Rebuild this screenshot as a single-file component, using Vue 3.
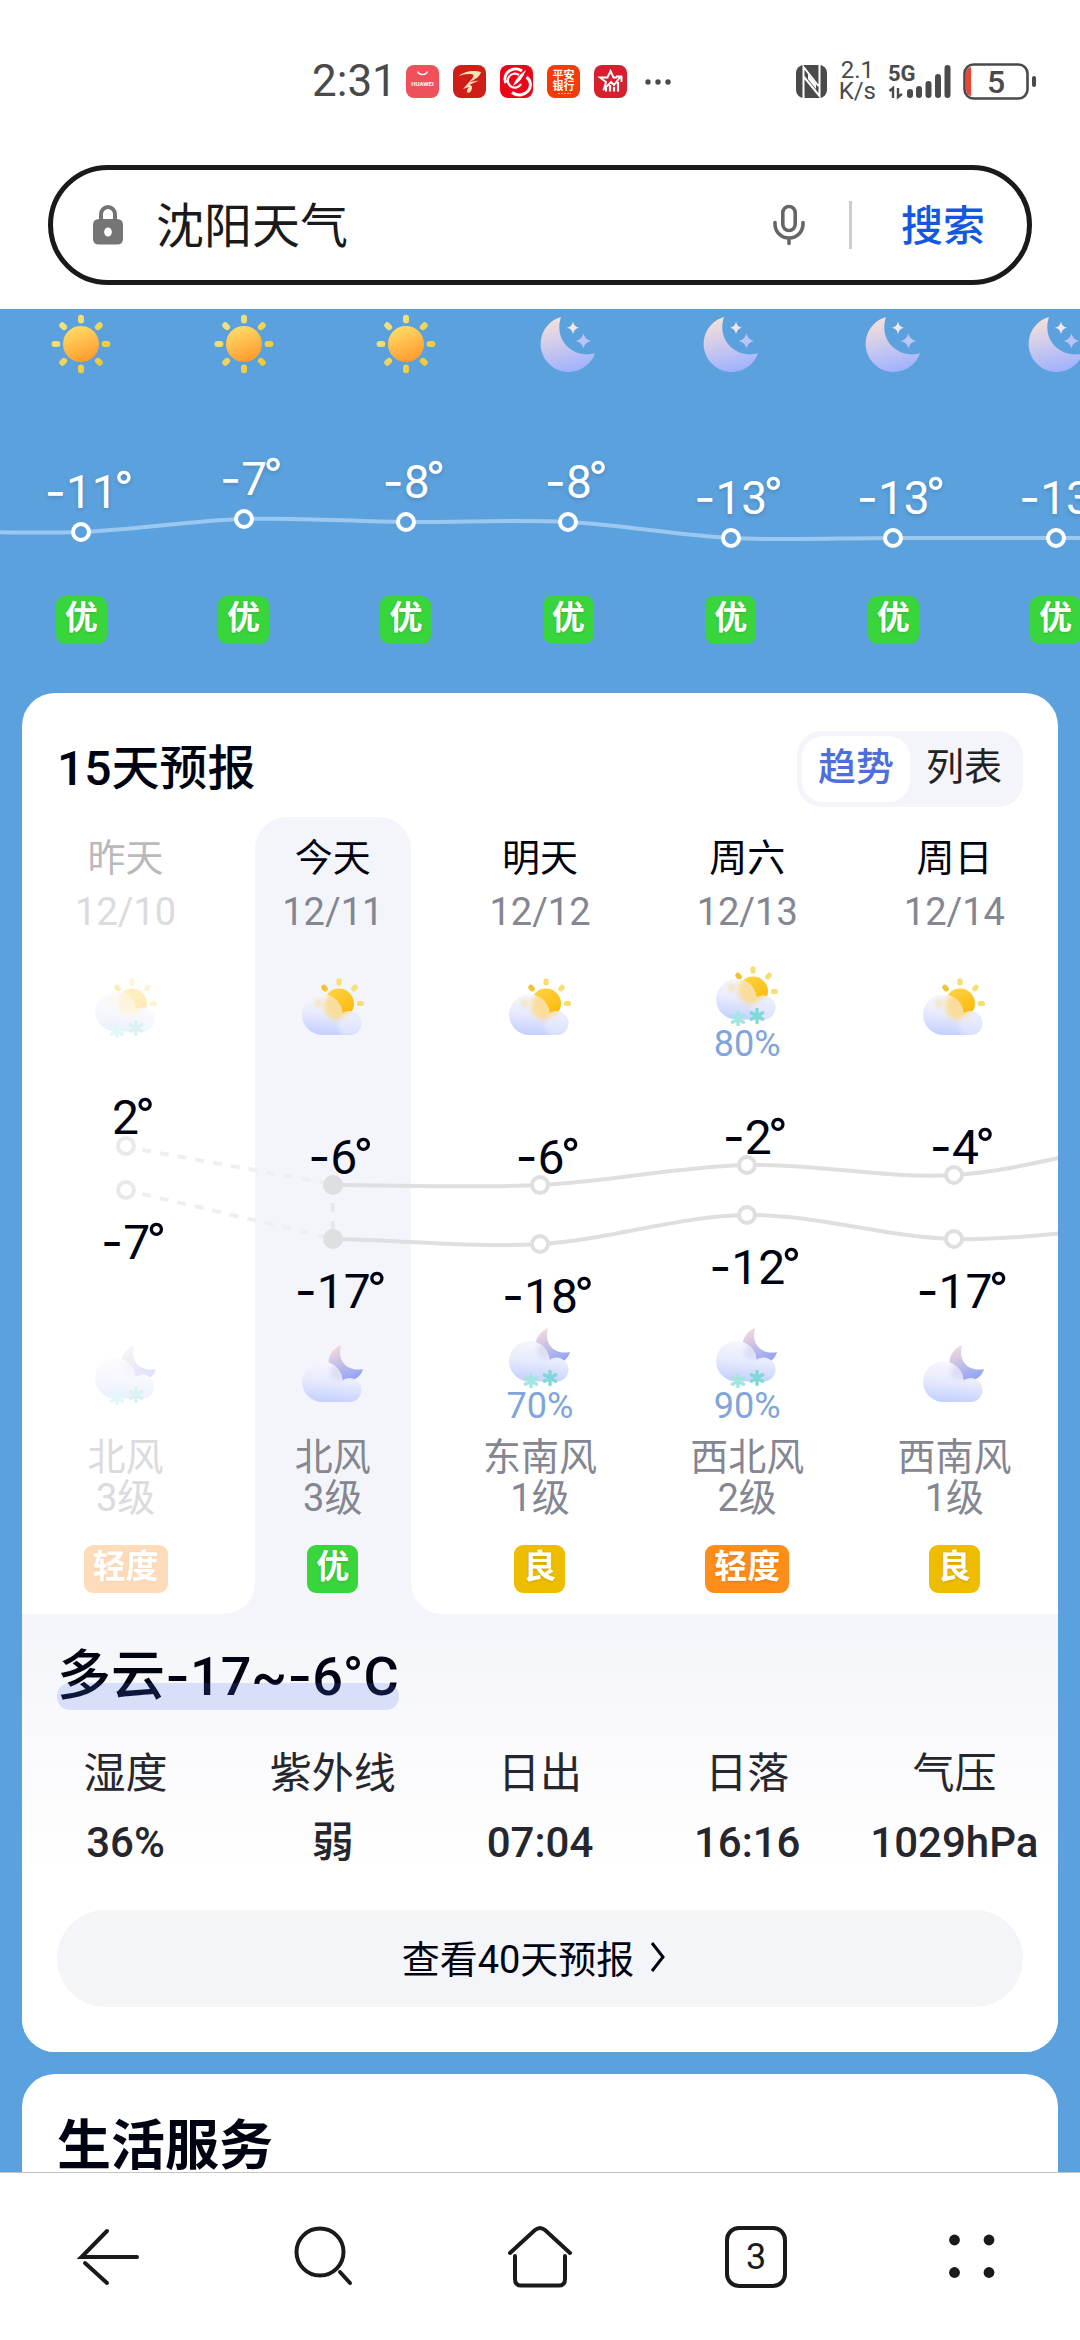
<script setup>
import { computed, h } from 'vue'

const hours = [
  { icon: 'sun', temp: -11, y: 158 },
  { icon: 'sun', temp: -7, y: 145 },
  { icon: 'sun', temp: -8, y: 148 },
  { icon: 'moon', temp: -8, y: 148 },
  { icon: 'moon', temp: -13, y: 164 },
  { icon: 'moon', temp: -13, y: 164 },
  { icon: 'moon', temp: -13, y: 164 },
]

const days = [
  { name: '昨天', date: '12/10', past: true, daySnow: true, nightSnow: true, high: 2, low: -7, hy: 84, ly: 128, wind: '北风', level: '3级', air: '轻度', tone: 'light' },
  { name: '今天', date: '12/11', today: true, high: -6, low: -17, hy: 123, ly: 177, wind: '北风', level: '3级', air: '优', tone: 'good' },
  { name: '明天', date: '12/12', nightSnow: true, nightRain: '70%', high: -6, low: -18, hy: 123, ly: 182, wind: '东南风', level: '1级', air: '良', tone: 'fair' },
  { name: '周六', date: '12/13', daySnow: true, dayRain: '80%', nightSnow: true, nightRain: '90%', high: -2, low: -12, hy: 103, ly: 153, wind: '西北风', level: '2级', air: '轻度', tone: 'light' },
  { name: '周日', date: '12/14', high: -4, low: -17, hy: 113, ly: 177, wind: '西南风', level: '1级', air: '良', tone: 'fair' },
]

const facts = [
  { label: '湿度', value: '36%' },
  { label: '紫外线', value: '弱' },
  { label: '日出', value: '07:04' },
  { label: '日落', value: '16:16' },
  { label: '气压', value: '1029hPa' },
]

// Catmull-Rom spline through evenly spaced values
function smooth(ys, startX, step = 100) {
  const pts = ys.map((y, i) => [startX + i * step, y])
  let d = `M${pts[0][0]} ${pts[0][1]}`
  for (let i = 0; i < pts.length - 1; i++) {
    const p0 = pts[i - 1] || pts[i]
    const [p1, p2] = [pts[i], pts[i + 1]]
    const p3 = pts[i + 2] || p2
    d += ` C${p1[0] + step / 3} ${p1[1] + (p2[1] - p0[1]) / 6} ${p2[0] - step / 3} ${p2[1] - (p3[1] - p1[1]) / 6} ${p2[0]} ${p2[1]}`
  }
  return d
}

const hourLine = computed(() => smooth([157, ...hours.map((x) => x.y), 164], -50))
const highLine = computed(() => smooth([...days.slice(1).map((x) => x.hy), 78], 150))
const lowLine = computed(() => smooth([...days.slice(1).map((x) => x.ly), 163], 150))

const Temp = (props) =>
  h('span', { class: 'temp-num' }, [
    props.value < 0 ? h('span', { class: 'minus' }, '-') : null,
    String(Math.abs(props.value)),
    h('span', { class: 'deg' }, '°'),
  ])
Temp.props = ['value']
</script>

<template>
  <div class="page">
    <svg class="defs" width="0" height="0" aria-hidden="true">
      <defs>
        <linearGradient id="sunFill" x1="0.3" y1="0" x2="0.7" y2="1">
          <stop offset="0" stop-color="#ffdd66" /><stop offset="1" stop-color="#ff982c" />
        </linearGradient>
        <linearGradient id="rayFill" gradientUnits="userSpaceOnUse" x1="5" y1="5" x2="55" y2="55">
          <stop offset="0" stop-color="#f2e486" /><stop offset="1" stop-color="#f0c62c" />
        </linearGradient>
        <linearGradient id="moonFill" gradientUnits="userSpaceOnUse" x1="22" y1="3" x2="34" y2="57">
          <stop offset="0" stop-color="#f5e0da" /><stop offset="1" stop-color="#a0b2ff" />
        </linearGradient>
        <linearGradient id="smallSun" x1="0" y1="0" x2="0.6" y2="1">
          <stop offset="0" stop-color="#ffd64a" /><stop offset="1" stop-color="#fbb90a" />
        </linearGradient>
        <linearGradient id="nightFill" x1="0.2" y1="0" x2="0.6" y2="1">
          <stop offset="0" stop-color="#f6dcd8" /><stop offset="1" stop-color="#91a2f6" />
        </linearGradient>
        <linearGradient id="cloudFill" x1="0.6" y1="0" x2="0.45" y2="1">
          <stop offset="0" stop-color="#f7f7fd" /><stop offset="0.5" stop-color="#e8ebfc" /><stop offset="1" stop-color="#c4d0ff" />
        </linearGradient>
        <clipPath id="cloudClip"><path d="M21 57A20.3 20.3 0 1 1 40.6 35.2A12 12 0 1 1 47 57Z" /></clipPath>
        <filter id="soft" x="-50%" y="-50%" width="200%" height="200%"><feGaussianBlur stdDeviation="2" /></filter>
        <symbol id="flake" viewBox="-8 -8 16 16">
          <path d="M0 -6.5V6.5M-5.6 -3.2L5.6 3.2M-5.6 3.2L5.6 -3.2" stroke-width="3.4" stroke-linecap="round" />
          <circle r="3.6" stroke="none" />
        </symbol>
        <symbol id="sun" viewBox="0 0 60 60">
          <circle cx="30" cy="30" r="18" fill="url(#sunFill)" />
          <g stroke="url(#rayFill)" stroke-width="6" stroke-linecap="round">
            <path d="M30 3.8L30.01 6.4M30 53.6L30.01 56.2M3.6 30L6.4 30.01M53.6 30L56.4 30.01M11.3 11.3L13.1 13.1M46.9 13.1L48.7 11.3M11.3 48.7L13.1 46.9M46.9 46.9L48.7 48.7" />
          </g>
        </symbol>
        <symbol id="moon" viewBox="-1 0 60 60">
          <path fill="url(#moonFill)" d="M22 3A28 28 0 1 0 56 39.3C36 45 14 28 22 3Z" />
          <path fill="#f2e6ea" d="M34 7.5Q35 12.7 40 13.7Q35 14.7 34 20Q33 14.7 28 13.7Q33 12.7 34 7.5Z" />
          <path fill="#bcc4f8" d="M44.4 19.5Q45.8 25.6 52 27Q45.8 28.4 44.4 34.5Q43 28.4 36.8 27Q43 25.6 44.4 19.5Z" />
        </symbol>
        <symbol id="cloud" viewBox="0 0 62 60">
          <path fill="url(#cloudFill)" d="M21 57A20.3 20.3 0 1 1 40.6 35.2A12 12 0 1 1 47 57Z" />
        </symbol>
      </defs>
    </svg>

    <header class="status">
      <div class="status-left">
        <span class="clock">2:31</span>
        <svg class="app" viewBox="0 0 33 33">
          <rect width="33" height="33" rx="8" fill="#f0505a" />
          <path d="M11.5 6.5A5.5 5.5 0 0 0 21.5 6.5" fill="none" stroke="#fff" stroke-width="1.3" />
          <text x="16.5" y="21" text-anchor="middle" font-size="6" font-weight="700" fill="#fff">HUAWEI</text>
        </svg>
        <svg class="app" viewBox="0 0 33 33">
          <rect width="33" height="33" rx="8" fill="#cf1d18" />
          <path d="M6 11C11 6 21 5 28 7C27 11 23 14 17 17L26 15.5L16 20C19 20 20 22 18 26C16 29 13 28 14 25L16 22L10 24L17 16C20 13 21 11 20 9.500C15 8.500 10 9.500 6 11Z" fill="#fbe3b8" />
        </svg>
        <svg class="app" viewBox="0 0 33 33">
          <rect width="33" height="33" rx="8" fill="#ec0519" />
          <path d="M22 6A10.500 10 0 0 0 6 18M12 27.500A11 10 0 0 0 26.500 12" fill="none" stroke="#fff" stroke-width="3" />
          <path d="M19 10A7 7 0 1 0 21 19" fill="none" stroke="#fff" stroke-width="2.200" />
          <path d="M26 5Q22 16 13 21Q16 12 26 5Z" fill="#fff" />
        </svg>
        <svg class="app" viewBox="0 0 33 33">
          <rect width="33" height="33" rx="8" fill="#f73a08" />
          <text x="16.5" y="14" text-anchor="middle" font-size="11" font-weight="700" fill="#fff">平安</text>
          <text x="16.5" y="25" text-anchor="middle" font-size="11" font-weight="700" fill="#fff">银行</text>
          <path d="M11 28.5H24" stroke="#ffc2a8" stroke-width="1" stroke-dasharray="2 1" />
        </svg>
        <svg class="app" viewBox="0 0 33 33">
          <rect width="33" height="33" rx="8" fill="#d6202e" />
          <path d="M10 24L12 17L6 12.5H13.5L16.5 6L19.500 12.5H23M9 25L17 17L20 20L27 11M22 11.500H27.500V17" fill="none" stroke="#fff" stroke-width="1.900" />
          <path d="M12 26.500V23M16 26.500V20M20 26.500V22M24 26.500V17" stroke="#fff" stroke-width="2.200" />
        </svg>
        <svg class="more" viewBox="0 0 26 33"><g fill="#4a4a4a"><circle cx="3" cy="17" r="2.700" /><circle cx="13" cy="17" r="2.700" /><circle cx="23" cy="17" r="2.700" /></g></svg>
      </div>
      <div class="status-right">
        <svg width="31" height="33" viewBox="0 0 31 33">
          <rect width="31" height="33" rx="8" fill="#4a4a4a" />
          <path d="M7.500 33V2L22.500 21M23.500 0V31L8 12" fill="none" stroke="#fff" stroke-width="2" />
          <path d="M12 14L20 24V19L12 9Z" fill="#fff" />
        </svg>
        <span class="speed">2.1<br />K/s</span>
        <svg width="63" height="44" viewBox="0 0 63 44">
          <text x="0" y="22" font-size="22" font-weight="700" fill="#4a4a4a">5G</text>
          <path d="M1.500 32L5 29V39M10 29V38L14 35" fill="none" stroke="#4a4a4a" stroke-width="2.400" />
          <path d="M22 33V36M31 30V36M40.500 25V36M50 18V36M59.500 9V36" stroke="#4a4a4a" stroke-width="6" stroke-linecap="round" />
        </svg>
        <svg width="74" height="37" viewBox="0 0 74 37">
          <path d="M3 11Q3 5 8 4V33Q3 32 3 26Z" fill="#ec4435" />
          <rect x="1.5" y="1.5" width="63" height="34" rx="9" fill="none" stroke="#4a4a4a" stroke-width="2.600" />
          <rect x="69" y="13" width="4" height="11" rx="2" fill="#4a4a4a" />
          <text x="33" y="30" text-anchor="middle" font-size="32" font-weight="500" fill="#4a4a4a">5</text>
        </svg>
      </div>
    </header>

    <form class="search" role="search" @submit.prevent>
      <svg width="30" height="40" viewBox="0 0 30 40" aria-hidden="true">
        <path d="M8 16V9.500A7 7.500 0 0 1 22 9.500V16" fill="none" stroke="#757575" stroke-width="4" />
        <path fill="#757575" fill-rule="evenodd" d="M6 14H24Q30 14 30 20V34Q30 39.500 24 39.500H6Q0 39.500 0 34V20Q0 14 6 14ZM15 22.500A3.600 4.200 0 1 0 15 31.500A3.600 4.200 0 1 0 15 22.500Z" />
      </svg>
      <input class="query" type="text" value="沈阳天气" aria-label="搜索内容" />
      <button class="mic" type="button" aria-label="语音搜索">
        <svg width="32" height="42" viewBox="0 0 32 42" fill="none" stroke="#666" stroke-width="3.600" stroke-linecap="round">
          <rect x="9.800" y="2.500" width="12.400" height="24" rx="6.200" />
          <path d="M2 18.500V20A14 14 0 0 0 30 20V18.500M16 34V39.500" />
        </svg>
      </button>
      <span class="divider"></span>
      <button class="go" type="submit">搜索</button>
    </form>

    <main class="content">
      <section class="hourly">
        <svg class="hour-line" viewBox="0 0 665 222" preserveAspectRatio="none">
          <path :d="hourLine" fill="none" stroke="#9bc8f0" stroke-width="4" vector-effect="non-scaling-stroke" />
        </svg>
        <div v-for="(hour, i) in hours" :key="i" class="hour">
          <svg width="60" height="60"><use :href="'#' + hour.icon" /></svg>
          <div class="hour-chart">
            <span class="label hour-label" :style="{ top: hour.y - 65 + 'px' }"><Temp :value="hour.temp" /></span>
            <span class="dot hour-dot" :style="{ top: hour.y - 10 + 'px' }"></span>
          </div>
          <span class="tag good">优</span>
        </div>
      </section>

      <section class="card">
        <div class="card-head">
          <h2 class="title">15天预报</h2>
          <div class="switch">
            <button type="button" class="on">趋势</button>
            <button type="button">列表</button>
          </div>
        </div>

        <div class="days">
          <svg class="day-line" viewBox="0 0 500 266" preserveAspectRatio="none">
            <g fill="none" stroke="#dedfe1" stroke-width="4">
              <path :d="highLine" vector-effect="non-scaling-stroke" />
              <path :d="lowLine" vector-effect="non-scaling-stroke" />
              <path d="M150 141V168" stroke-dasharray="9 9" stroke="#e6e7ea" vector-effect="non-scaling-stroke" />
              <path d="M58 88L147 121M58 132L147 175" stroke-dasharray="9 9" stroke="#eeeff1" vector-effect="non-scaling-stroke" />
            </g>
          </svg>
          <article v-for="day in days" :key="day.date" class="day" :class="{ past: day.past, today: day.today }">
            <h3 class="day-name">{{ day.name }}</h3>
            <p class="day-date">{{ day.date }}</p>
            <div class="sky" :class="{ raised: day.dayRain }">
              <svg class="sky-icon" width="62" height="60" viewBox="0 0 62 60">
                <circle cx="37" cy="25.500" r="15" fill="url(#smallSun)" />
                <g stroke-width="5.200" stroke-linecap="round">
                  <path d="M37 2.800V5M51.700 10.800L53.200 9.300M57.300 25.500H59.400" stroke="#f8df74" />
                  <path d="M21.800 9.300L23.300 10.800" stroke="#f2c233" />
                </g>
                <g :transform="day.daySnow ? 'translate(0 -3.500)' : null">
                  <use href="#cloud" width="62" height="60" />
                  <g clip-path="url(#cloudClip)">
                    <circle cx="36" cy="28" r="14" fill="#fbdb92" filter="url(#soft)" opacity="0.900" />
                    <circle cx="16" cy="25" r="3.500" fill="#f8e0b0" filter="url(#soft)" />
                    <circle cx="48" cy="47" r="12" fill="#eef0fd" filter="url(#soft)" opacity="0.500" />
                  </g>
                </g>
                <g v-if="day.daySnow">
                  <use href="#flake" x="14" y="45" width="16" height="16" fill="#a2e6e2" stroke="#a2e6e2" />
                  <use href="#flake" x="33" y="42" width="16" height="16" fill="#7fd9d6" stroke="#7fd9d6" />
                </g>
              </svg>
              <span v-if="day.dayRain" class="rain">{{ day.dayRain }}</span>
            </div>
            <div class="day-chart">
              <span class="dot" :style="{ top: day.hy - 10 + 'px' }"></span>
              <span class="dot" :style="{ top: day.ly - 10 + 'px' }"></span>
              <span class="label" :style="{ top: day.hy - 52 + 'px' }"><Temp :value="day.high" /></span>
              <span class="label" :style="{ top: day.ly + 28 + 'px' }"><Temp :value="day.low" /></span>
            </div>
            <div class="sky night" :class="{ raised: day.nightRain }">
              <svg class="sky-icon" width="62" height="60" viewBox="0 0 62 60">
                <path fill="url(#nightFill)" d="M39 0C30 4 25 12 27 21C29 32 38 37 46 36C54 35 59 31 61 24C49 27 34 19 39 0Z" />
                <g :transform="day.nightSnow ? 'translate(0 -3.500)' : null">
                  <use href="#cloud" width="62" height="60" />
                  <g clip-path="url(#cloudClip)">
                    <circle cx="36" cy="27" r="8" fill="#dcdcf6" filter="url(#soft)" opacity="0.900" />
                  </g>
                </g>
                <g v-if="day.nightSnow">
                  <use href="#flake" x="14" y="45" width="16" height="16" fill="#a2e6e2" stroke="#a2e6e2" />
                  <use href="#flake" x="33" y="42" width="16" height="16" fill="#7fd9d6" stroke="#7fd9d6" />
                </g>
              </svg>
              <span v-if="day.nightRain" class="rain">{{ day.nightRain }}</span>
            </div>
            <p class="wind">{{ day.wind }}<br />{{ day.level }}</p>
            <span class="tag" :class="day.tone">{{ day.air }}</span>
          </article>
        </div>

        <div class="detail">
          <h2 class="summary">多云<span class="minus">-</span>17~<span class="minus">-</span>6°C</h2>
          <dl class="facts">
            <div v-for="fact in facts" :key="fact.label" class="fact">
              <dt>{{ fact.label }}</dt>
              <dd>{{ fact.value }}</dd>
            </div>
          </dl>
          <a class="more-link" href="#">
            查看40天预报
            <svg width="16" height="30" viewBox="0 0 16 30" fill="none" stroke="#000311" stroke-width="3" aria-hidden="true"><path d="M2 1L13 15L2 29" /></svg>
          </a>
        </div>
      </section>

      <section class="card life">
        <h2 class="life-title">生活服务</h2>
      </section>
    </main>

    <nav class="bar">
      <button type="button" aria-label="返回">
        <svg viewBox="0 0 64 64"><path d="M31 6L5.500 32H61M9 38L31 58" /></svg>
      </button>
      <button type="button" aria-label="搜索">
        <svg viewBox="0 0 64 64"><circle cx="28" cy="27" r="23.500" /><path d="M48 47L58 58" /></svg>
      </button>
      <button type="button" aria-label="主页">
        <svg viewBox="0 0 64 64"><path d="M2 28L27 5Q32 1 37 5L62 28M7 31V54Q7 60.500 13 60.500H51Q57 60.500 57 54V31" /></svg>
      </button>
      <button type="button" aria-label="标签页"><span class="tabs">3</span></button>
      <button type="button" aria-label="菜单">
        <svg class="dots" viewBox="0 0 64 64"><circle cx="14.500" cy="15" r="5.400" /><circle cx="49" cy="15" r="5.400" /><circle cx="14.500" cy="47.500" r="5.400" /><circle cx="49" cy="47.500" r="5.400" /></svg>
      </button>
    </nav>
  </div>
</template>

<style>
body {
  margin: 0;
  background: #fff;
}
</style>

<style scoped>
.page {
  display: flex;
  flex-direction: column;
  height: 100vh;
  overflow: hidden;
  background: #fff;
  color: #000311;
  font-family: Roboto, "Noto Sans CJK SC", sans-serif;
}
.defs {
  position: absolute;
}
h2, h3, p, dl, dd {
  margin: 0;
  font-weight: 400;
}
button {
  padding: 0;
  border: 0;
  background: none;
  color: inherit;
  font: inherit;
}
svg {
  display: block;
}
:deep(.minus), .minus {
  font-family: Inter, sans-serif;
}

/* status bar */
.status {
  display: flex;
  flex: none;
  justify-content: space-between;
  align-items: center;
  height: 52px;
  padding: 55px 43px 0 312px;
  color: #4a4a4a;
}
.status-left, .status-right {
  display: flex;
  align-items: center;
  gap: 14px;
}
.status-right {
  gap: 12px;
}
.clock {
  width: 80px;
  font-size: 44px;
  line-height: 52px;
}
.app {
  width: 33px;
  height: 33px;
}
.more {
  width: 26px;
  height: 33px;
  margin-left: 4px;
}
.speed {
  font-size: 24px;
  line-height: 21px;
  text-align: center;
}

/* search box */
.search {
  display: flex;
  flex: none;
  align-items: center;
  box-sizing: border-box;
  height: 120px;
  margin: 58px 48px 24px;
  padding: 0 42px 0 40px;
  border: 5px solid #1a1a1a;
  border-radius: 60px;
}
.query {
  flex: 1;
  min-width: 0;
  margin-left: 33px;
  padding: 0 0 6px;
  border: 0;
  outline: 0;
  background: none;
  color: #1a1a1a;
  font: 48px/64px "Noto Sans CJK SC", sans-serif;
}
.divider {
  width: 3px;
  height: 48px;
  margin: 0 49px 0 44px;
  background: #ccc;
}
.go {
  padding-bottom: 6px;
  color: #1558e0;
  font-size: 42px;
  font-weight: 500;
}

/* hourly forecast */
.content {
  flex: 1;
  min-height: 0;
  overflow: hidden;
  background: #5ba1dd;
}
.hourly {
  position: relative;
  display: grid;
  grid-auto-flow: column;
  grid-auto-columns: calc(100% / 6.65);
  overflow: hidden;
  padding: 5px 0 49px;
}
.hour-line {
  position: absolute;
  top: 65px;
  left: 0;
  width: 100%;
  height: 222px;
}
.hour {
  display: flex;
  flex-direction: column;
  align-items: center;
}
.hour-chart {
  position: relative;
  width: 100%;
  height: 222px;
  color: #fff;
}
.label {
  position: absolute;
  left: 0;
  right: 0;
  font-size: 48px;
  line-height: 48px;
  text-align: center;
}
.hour-label {
  font-size: 46px;
  text-shadow: 0 2px 4px rgba(0, 0, 0, 0.15);
}
:deep(.temp-num) {
  position: relative;
}
:deep(.deg) {
  position: absolute;
  left: 100%;
  bottom: 4px;
  margin-left: -4px;
  font-size: 54px;
  line-height: 48px;
}
.dot {
  position: absolute;
  left: 50%;
  box-sizing: border-box;
  width: 20px;
  height: 20px;
  margin-left: -10px;
  border: 4px solid #dedfe1;
  border-radius: 50%;
  background: #fff;
}
.hour-dot {
  border-color: #fff;
  background: #5ba1dd;
}
.tag {
  padding: 0 9px 4px;
  border-radius: 9px;
  color: #fff;
  font-size: 33px;
  font-weight: 700;
  line-height: 44px;
  text-shadow: 0 1px 3px rgba(0, 0, 0, 0.15);
}
.good { background: #39d53c; }
.fair { background: #efbd00; }
.light { background: #ff8d1a; }

/* forecast card */
.card {
  margin: 0 22px;
  overflow: hidden;
  border-radius: 33px;
  background: #fff;
}
.card-head {
  display: flex;
  justify-content: space-between;
  align-items: center;
  padding: 38px 35px 10px;
}
.title {
  font-size: 48px;
  font-weight: 500;
  line-height: 64px;
}
.switch {
  display: flex;
  padding: 5px;
  border-radius: 25px;
  background: #f4f5fa;
}
.switch button {
  width: 108px;
  padding-bottom: 4px;
  border-radius: 21px;
  color: #222;
  font-size: 38px;
  line-height: 62px;
}
.switch .on {
  background: #fff;
  color: #4e6edb;
  font-weight: 500;
}
.days {
  position: relative;
  display: grid;
  grid-template-columns: repeat(5, 1fr);
}
.day-line {
  position: absolute;
  top: 245px;
  left: 0;
  z-index: 1;
  width: 100%;
  height: 266px;
}
.day {
  position: relative;
  display: flex;
  flex-direction: column;
  align-items: center;
  padding: 19px 0 21px;
}
.day > * {
  z-index: 2;
}
.today::before {
  content: "";
  position: absolute;
  top: 0;
  bottom: 0;
  left: 50%;
  z-index: 0;
  width: 156px;
  margin-left: -78px;
  border-radius: 32px 32px 0 0;
  background: #f4f5fa;
}
.today::after {
  content: "";
  position: absolute;
  bottom: 0;
  left: 50%;
  z-index: 0;
  width: 216px;
  height: 30px;
  margin-left: -108px;
  background:
    radial-gradient(circle at 0 0, #fff 29px, #f4f5fa 30px) left / 30px 30px no-repeat,
    radial-gradient(circle at 100% 0, #fff 29px, #f4f5fa 30px) right / 30px 30px no-repeat;
}
.day-name, .day-date {
  font-size: 38px;
  line-height: 44px;
}
.day-date {
  margin-top: 10px;
  color: #848691;
}
.sky {
  display: flex;
  flex-direction: column;
  align-items: center;
  gap: 3px;
  box-sizing: border-box;
  height: 96px;
  margin-top: 32px;
  padding-top: 12px;
}
.sky.night {
  height: 94px;
  margin-top: 0;
  padding-top: 17px;
}
.sky.raised {
  padding-top: 0;
}
.rain {
  color: #7fa5dc;
  font-size: 36px;
  line-height: 30px;
}
.day-chart {
  position: relative;
  width: 100%;
  height: 266px;
}
.today .dot {
  background: #dedfe1;
}
.wind {
  margin: 15px 0 26px;
  color: #848691;
  font-size: 38px;
  line-height: 41px;
  text-align: center;
}
.past .day-name {
  color: #bababc;
}
.past .day-date, .past .wind {
  color: #dbdbde;
}
.past .dot {
  border-color: #e8e9eb;
}
.past .sky-icon, .past .tag {
  opacity: 0.3;
}

/* selected day */
.detail {
  padding: 29px 0 45px;
  background: linear-gradient(#f4f5fa, #fff 260px);
}
.summary {
  position: relative;
  width: max-content;
  margin-left: 35px;
  font-size: 54px;
  font-weight: 500;
  line-height: 66px;
}
.summary::after {
  content: "";
  position: absolute;
  left: 0;
  right: 0;
  bottom: 0;
  height: 27px;
  border-radius: 13px;
  background: rgba(78, 110, 242, 0.18);
}
.facts {
  display: grid;
  grid-template-columns: repeat(5, 1fr);
  margin: 36px 0 39px;
  color: #26272e;
  font-size: 42px;
}
.fact {
  display: flex;
  flex-direction: column;
  align-items: center;
  gap: 13px;
  line-height: 56px;
}
.fact dd {
  font-weight: 500;
}
.more-link {
  display: flex;
  justify-content: center;
  align-items: center;
  gap: 16px;
  box-sizing: border-box;
  height: 97px;
  margin: 0 35px;
  padding: 0 12px 4px 0;
  border-radius: 49px;
  background: #f4f5f9;
  color: #000311;
  font-size: 38px;
  text-decoration: none;
}
.life {
  margin-top: 22px;
  padding: 40px 35px;
}
.life-title {
  font-size: 54px;
  font-weight: 700;
  line-height: 66px;
}

/* browser toolbar */
.bar {
  display: grid;
  flex: none;
  grid-template-columns: repeat(5, 1fr);
  height: 167px;
  border-top: 1px solid #c4c4c4;
  background: #fff;
}
.bar button {
  display: flex;
  justify-content: center;
  align-items: center;
}
.bar svg {
  width: 64px;
  height: 64px;
  fill: none;
  stroke: #1a1a1a;
  stroke-width: 4;
  stroke-linecap: round;
}
.bar .dots {
  fill: #1a1a1a;
  stroke: none;
}
.tabs {
  box-sizing: border-box;
  width: 62px;
  height: 62px;
  border: 4px solid #1a1a1a;
  border-radius: 14px;
  color: #1a1a1a;
  font-size: 36px;
  line-height: 54px;
}
</style>
